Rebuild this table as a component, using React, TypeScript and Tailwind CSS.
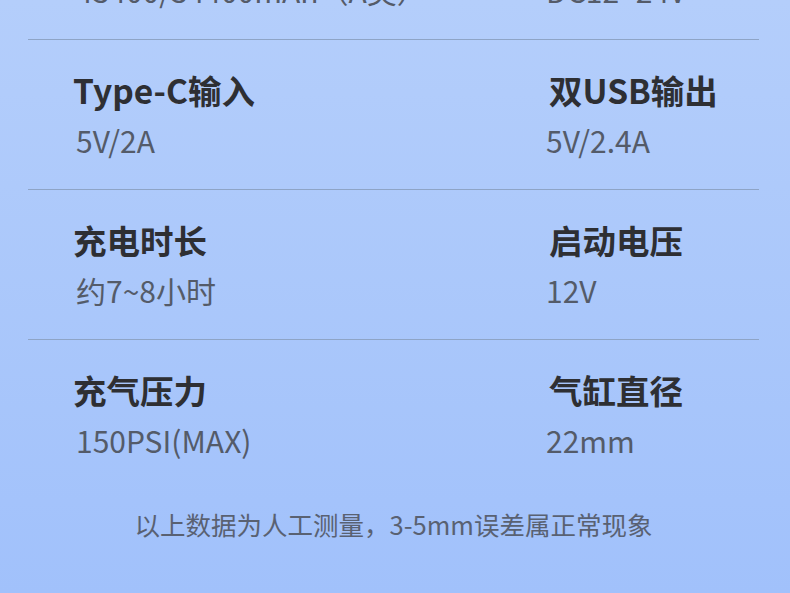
import React from "react";

const rows = [
  { lt: "电池容量", lv: "43400/34400mAh（A类）", rt: "适用电压", rv: "DC12~24V" },
  { lt: "Type-C输入", lv: "5V/2A", rt: "双USB输出", rv: "5V/2.4A" },
  { lt: "充电时长", lv: "约7~8小时", rt: "启动电压", rv: "12V" },
  { lt: "充气压力", lv: "150PSI(MAX)", rt: "气缸直径", rv: "22mm" },
];

const font = { fontFamily: '"Noto Sans CJK SC", "Noto Sans", sans-serif' };

export default function App() {
  return (
    <div
      className="w-[790px] h-[593px] overflow-hidden bg-gradient-to-b from-[#b4cefb] to-[#a1c1fb]"
      style={font}
    >
      <div className="ml-[28px] w-[731px] mt-[-110px]">
        {rows.map((r, i) => (
          <div
            key={i}
            className={
              "grid grid-cols-[520px_1fr] pt-[30px] pb-[31px] " +
              (i > 0 ? "border-t border-[#8ea4c6]" : "")
            }
          >
            <div className="pl-[45px]">
              <div className="h-[40px] leading-[40px] text-[33.5px] font-bold text-[#2e2f33] whitespace-nowrap">
                {r.lt}
              </div>
              <div className="mt-[12px] h-[36px] leading-[36px] text-[30px] text-[#545b69] pl-[3px] whitespace-nowrap">
                {r.lv}
              </div>
            </div>
            <div className="pl-[1px]">
              <div className="h-[40px] leading-[40px] text-[33.5px] font-bold text-[#2e2f33] whitespace-nowrap">
                {r.rt}
              </div>
              <div className="mt-[12px] h-[36px] leading-[36px] text-[30px] text-[#545b69] ml-[-3px] whitespace-nowrap">
                {r.rv}
              </div>
            </div>
          </div>
        ))}
        <div className="mt-[19px] text-center text-[25.5px] leading-[32px] text-[#596172] whitespace-nowrap">
          以上数据为人工测量，3-5mm误差属正常现象
        </div>
      </div>
    </div>
  );
}
